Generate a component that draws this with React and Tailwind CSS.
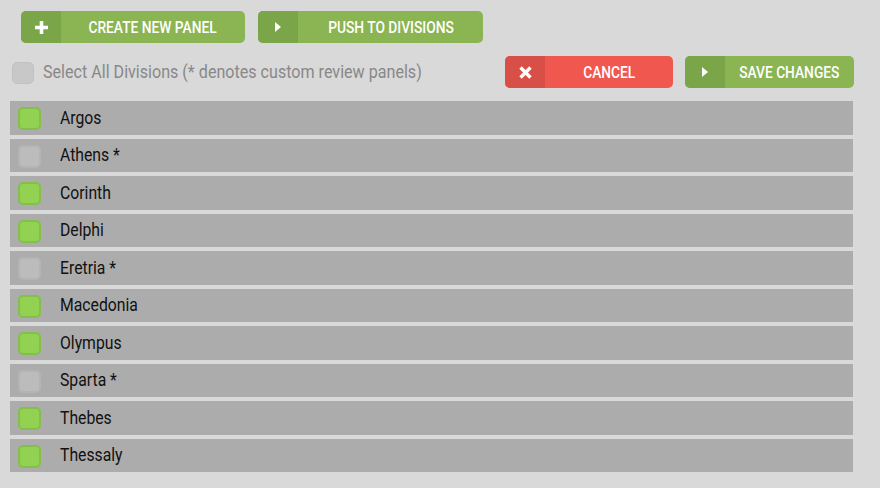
import { useState } from "react";

const divisions = [
  { name: "Argos", on: true },
  { name: "Athens *", on: false },
  { name: "Corinth", on: true },
  { name: "Delphi", on: true },
  { name: "Eretria *", on: false },
  { name: "Macedonia", on: true },
  { name: "Olympus", on: true },
  { name: "Sparta *", on: false },
  { name: "Thebes", on: true },
  { name: "Thessaly", on: true },
];

const font = { fontFamily: "Roboto, 'Liberation Sans', sans-serif" };

const Play = () => (
  <svg className="w-[8px] h-[10px]" viewBox="0 0 8 10">
    <path d="M1 0 L7 5 L1 10 Z" fill="white" />
  </svg>
);

const Plus = () => (
  <svg className="w-[15px] h-[15px]" viewBox="0 0 15 15">
    <path d="M7.5 1v13M1 7.5h13" stroke="white" strokeWidth="3.6" />
  </svg>
);

const Cross = () => (
  <svg className="w-[13px] h-[13px]" viewBox="0 0 13 13">
    <path d="M1.5 1.5l10 10M11.5 1.5l-10 10" stroke="white" strokeWidth="3.4" />
  </svg>
);

const Btn = ({ icon, label, w, red }) => (
  <button
    className={`flex h-8 rounded-[5px] overflow-hidden text-white text-[16px] font-medium ${w} ${red ? "bg-[#f0574f]" : "bg-[#8ab552]"}`}
  >
    <span className={`w-10 h-full flex items-center justify-center ${red ? "bg-[#d84f48]" : "bg-[#7aa548]"}`}>
      {icon}
    </span>
    <span className="flex-1 h-full flex items-center justify-center pt-[2px]">
      <span className="inline-block scale-x-[0.86] whitespace-nowrap">{label}</span>
    </span>
  </button>
);

export default function App() {
  const [rows, setRows] = useState(divisions);

  return (
    <div className="w-[880px] h-[488px] bg-[#d9d9d9] overflow-hidden" style={font}>
      <div className="flex gap-[13px] pl-[21px] pt-[11px]">
        <Btn icon={<Plus />} label="CREATE NEW PANEL" w="w-[224px]" />
        <Btn icon={<Play />} label="PUSH TO DIVISIONS" w="w-[225px]" />
      </div>

      <div className="flex items-center mt-[13px] pl-[12px] pr-[26px]">
        <span className="w-[22px] h-[22px] rounded-[5px] bg-[#c8c8c8] border border-[#c2c2c2] mt-[2px]" />
        <span className="ml-[9px] text-[17.5px] text-[#888] inline-block origin-left scale-x-[0.92] whitespace-nowrap">
          Select All Divisions (* denotes custom review panels)
        </span>
        <div className="ml-auto flex gap-[12px]">
          <Btn icon={<Cross />} label="CANCEL" w="w-[168px]" red />
          <Btn icon={<Play />} label="SAVE CHANGES" w="w-[169px]" />
        </div>
      </div>

      <div className="flex flex-col gap-[4px] mt-[13px] ml-[10px] w-[843px]">
        {rows.map((d, i) => (
          <div key={d.name} className="h-[33.5px] bg-[#acacac] flex items-center pl-[8px]">
            <span
              onClick={() => setRows(rows.map((r, j) => (j === i ? { ...r, on: !r.on } : r)))}
              className={`w-[23px] h-[23px] rounded-[5px] border-2 mt-[2px] ${
                d.on ? "bg-[#93d152] border-[#84bf4a]" : "bg-[#bcbcbc] border-[#b4b4b4]"
              }`}
            />
            <span className="ml-[19px] text-[17.5px] text-[#111] inline-block origin-left scale-x-[0.9] whitespace-nowrap">
              {d.name}
            </span>
          </div>
        ))}
      </div>
    </div>
  );
}
